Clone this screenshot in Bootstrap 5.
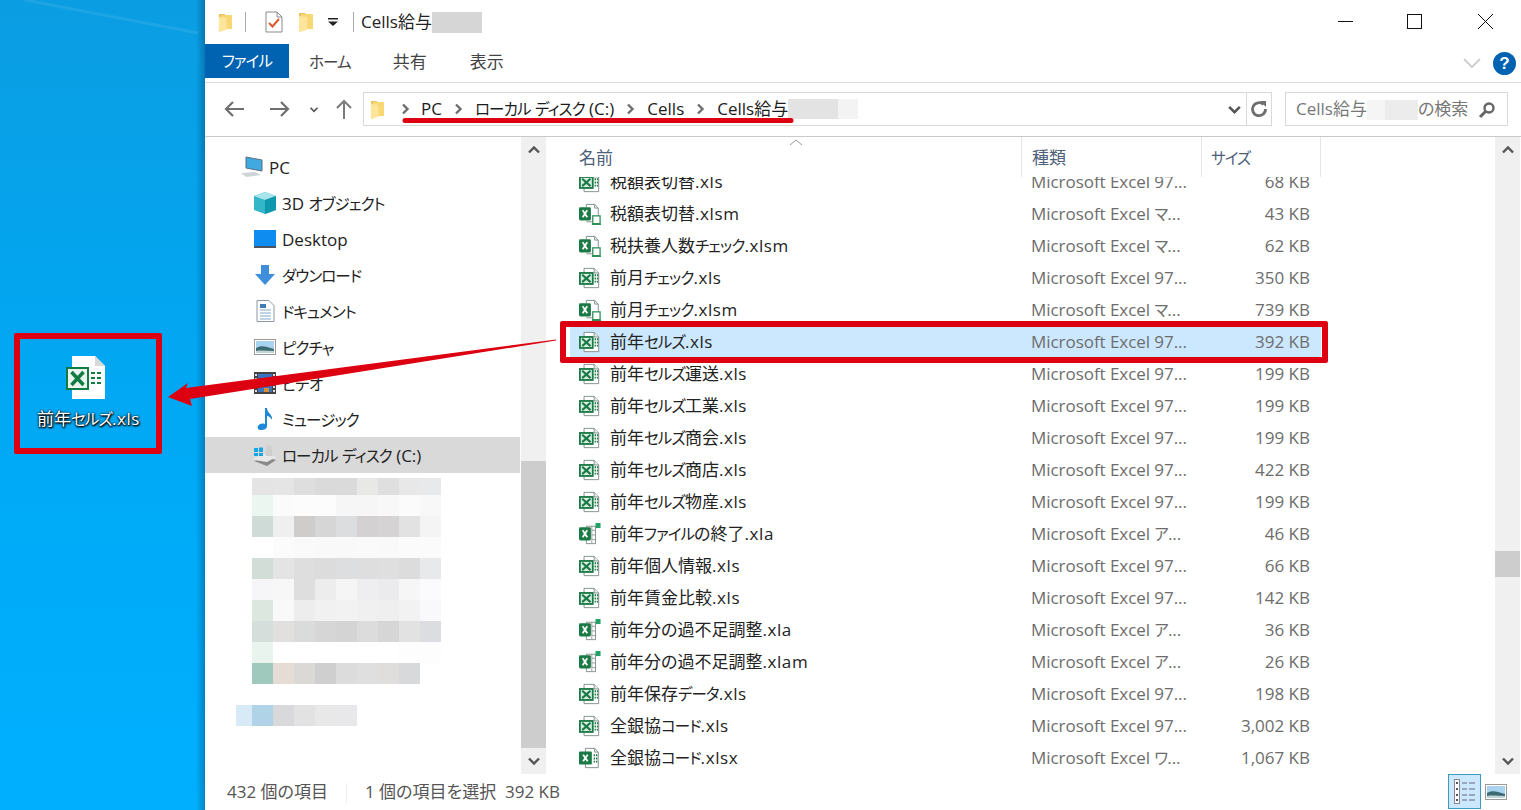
<!DOCTYPE html>
<html lang="ja">
<head>
<meta charset="UTF-8">
<title>Cells給与</title>
<link href="https://cdn.jsdelivr.net/npm/bootstrap@5.3.2/dist/css/bootstrap.min.css" rel="stylesheet">
<style>
html, body { height: 810px; overflow: hidden; }
body { font-family: "Open Sans", "Noto Sans CJK JP", sans-serif; font-size: 17px; line-height: 1.2; color: #222; background: #fff; position: relative; font-feature-settings: "palt"; }
svg { display: block; flex: none; }
.kana { font-size: 15.5px; letter-spacing: -.9px; }
.ext { letter-spacing: .6px; }

.desk-pane { width: 205px; flex: none; padding: 356px 0 0 66px; color: #fff; position: relative;
  background: linear-gradient(to right, transparent 196px, rgba(0, 50, 90, .35) 205px), linear-gradient(to bottom, #0b9de2 0%, #03a5ef 35%, #00abf8 65%, #00b0ff 100%); }
.desk-label { margin: 9px 0 0 -29px; text-shadow: 0 1px 2px #000, 1px 1px 2px #000, 0 0 2px #000; white-space: nowrap; }
.desk-mark { position: absolute; left: 14px; top: 333px; width: 148px; height: 121px; border: 6px solid #dd0010; border-radius: 2px; }

.win { min-width: 0; height: 810px; }
.title-bar { height: 44px; flex: none; }
.title-sep { width: 1px; height: 20px; background: #aaa; }
.tb-folder { margin-left: 13px; }
.tb-sep1 { margin-left: 12px; }
.tb-check { margin-left: 19px; }
.tb-folder2 { margin-left: 15px; }
.tb-drop { margin-left: 14px; }
.tb-sep2 { margin-left: 15px; }
.tb-title { margin-left: 7px; }
.title-blur { width: 50px; height: 21px; background: #d6d6d6; }
.win-ctrls { width: 183px; padding-right: 28px; }
.ctrl-max { margin-left: 54px; }
.ctrl-close { margin-left: 56px; }
.tab-bar { height: 39px; flex: none; border-bottom: 1px solid #dadada; padding-right: 5px; }
.tab-file { width: 84px; height: 34px; background: #0063b1; color: #fff; }
.tab-item { color: #444; height: 34px; padding-top: 3px; }
.tab-home { margin-left: 20px; }
.tab-share { margin-left: 42px; }
.tab-view { margin-left: 43px; }
.tab-tools { height: 38px; }
.help-dot { width: 23px; height: 23px; border-radius: 50%; background: #0063b1; color: #fff; font-family: "Liberation Sans", sans-serif; font-weight: 700; font-size: 17px; line-height: 23px; text-align: center; }
.addr-bar { height: 54px; flex: none; border-bottom: 1px solid #c9c9c9; padding: 9px 13px 10px 0; }
.addr-nav { width: 158px; padding-left: 19px; }
.nav-fwd { margin-left: 26px; }
.nav-down { margin-left: 19px; }
.nav-up { margin-left: 17px; }
.addr-box { width: 909px; height: 34px; border: 1px solid #d9d9d9; }
.addr-folder { margin-left: 6px; }
.addr-path { color: #1c1c1c; padding-top: 1px; }
.path-chev { margin: 0 12px 0 11px; }
.path-chev-first { margin: 0 11px 0 15px; }
.path-blur { width: 50px; height: 20px; background: #e3e3e3; }
.path-blur2 { width: 20px; height: 20px; background: #f3f3f3; }
.addr-tools { width: 25px; height: 32px; border-left: 1px solid #d9d9d9; }
.search-box { width: 223px; height: 34px; margin-left: 13px; border: 1px solid #d9d9d9; color: #777; padding: 1px 11px 0 10px; }
.search-blur { width: 18px; height: 20px; background: #f5f5f5; }
.search-blur2 { width: 33px; height: 20px; background: #ececec; }

.main-row { min-height: 0; }
.nav-pane { width: 316px; flex: none; padding-top: 12px; }
.nav-row { height: 36px; padding-left: 49px; gap: 6px; color: #222; width: 315px; }
.nav-row.nav-top { padding-left: 37px; gap: 5px; }
.nav-row.nav-sel { background: #d9d9d9; }
.nav-ico { width: 22px; }
.nav-label { padding-top: 2px; }
.mosaic-top { height: 5px; }
.mosaic-line { display: flex; margin-left: 47px; height: 21px; }
.mosaic-line span { display: block; width: 21px; }
.mosaic-line .mosaic-lead { width: 16px; margin-left: -16px; background: #d8eaf6; }
.scroll-rail { width: 25px; flex: none; background: #f0f0f0; }
.scroll-btn { height: 26px; flex: none; }
.scroll-thumb { background: #cdcdcd; }
.rail-nav-gap { height: 298px; }
.rail-file-gap { height: 388px; }
.rail-file-thumb { height: 26px; }
.win-edge { width: 1px; }
.file-pane { min-width: 0; padding-left: 24px; }
.file-head { height: 40px; flex: none; color: #4c607a; position: relative; }
.col-name { width: 451px; flex: none; padding-left: 9px; }
.col-type { width: 180px; flex: none; padding-left: 10px; letter-spacing: -.05px; }
.col-size { width: 120px; flex: none; padding-right: 11px; }
.file-head > div { height: 40px; display: flex; align-items: center; padding-top: 2px; }
.file-head .col-type, .file-head .col-size { border-left: 1px solid #e5e5e5; }
.file-head .col-size { border-right: 1px solid #e5e5e5; padding-left: 9px; }
.sort-caret { position: absolute; left: 219px; top: 2px; }
.file-scroll { min-height: 0; overflow: hidden; }
.file-list { margin-top: -11px; }
.file-row { height: 32px; width: 751px; padding-top: 1px; }
.file-row.file-sel { background: #cce8ff; }
.file-row .col-name { display: flex; align-items: center; gap: 9px; }
.file-row .col-type, .file-row .col-size { color: #6d6d6d; }
.file-row svg { margin-top: -1px; }
.status-bar { height: 36px; flex: none; color: #555; padding: 1px 0 0 22px; position: relative; }
.status-sep { width: 1px; height: 20px; background: #eee; margin: 0 18px 0 18px; }
.view-btns { position: absolute; left: 1243px; top: 0; gap: 4px; }
.view-on { width: 33px; height: 35px; background: #cce8ff; border: 1px solid #3e9bbb; }

.mark-layer { position: absolute; left: 0; top: 0; pointer-events: none; }
.file-mark { position: absolute; left: 560px; top: 321px; width: 768px; height: 42px; border: 6px solid #dd0010; border-radius: 2px; pointer-events: none; }
</style>
</head>
<body class="d-flex">

<svg width="0" height="0" class="position-absolute">
  <symbol id="folder" viewBox="0 0 16 22">
    <path d="M1 2h6l1 1v15l-7 3z" fill="#e9c25c"/><path d="M3 3h12v15H3z" fill="#f8d775"/><path d="M1 5l8 1v13l-8 2z" fill="#fde59b"/>
  </symbol>
  <symbol id="xls" viewBox="0 0 24 24">
    <path d="M5.500 1.500h11l5 5v16h-16z" fill="#fff" stroke="#7f8a84"/><path d="M16.500 1.500v5h5" fill="#eee" stroke="#7f8a84"/>
    <rect x="1" y="6.500" width="14" height="12" fill="#d9efe2" stroke="#1c7a46" stroke-width="2"/>
    <path d="M3.500 8.500l9 8M12.500 8.500l-9 8" stroke="#1c7a46" stroke-width="2.400"/>
    <path d="M17 9h1.500M19.500 9H21M17 12.500h1.500M19.500 12.500H21M17 16h1.500M19.500 16H21" stroke="#1c7a46" stroke-width="2"/>
  </symbol>
  <symbol id="xlsm" viewBox="0 0 24 24">
    <path d="M8 1.500h9l4 4v8M8 1.500v3M8 20.500h6" fill="none" stroke="#7f8a84"/><path d="M17 1.500v4h4" fill="none" stroke="#7f8a84"/>
    <rect x="0" y="4.500" width="13" height="14.500" rx="1.500" fill="#1c7a46"/>
    <path d="M4 8l5 7.500M9 8l-5 7.500" stroke="#fff" stroke-width="2"/>
    <rect x="15" y="14" width="8" height="8.500" fill="#fff" stroke="#2f8f5b" stroke-width="1.400"/><path d="M14 23.200h10" stroke="#2f8f5b" stroke-width="1.600"/>
  </symbol>
  <symbol id="xla" viewBox="0 0 24 24">
    <path d="M8 3.500h10v19H8z" fill="#fff" stroke="#7f8a84"/><path d="M14 8h4M14 13h4M14 18h4M14 3.500v19" stroke="#999"/>
    <rect x="0" y="4.500" width="13" height="14.500" rx="1.500" fill="#1c7a46"/>
    <path d="M4 8l5 7.500M9 8l-5 7.500" stroke="#fff" stroke-width="2"/>
    <rect x="18" y="0" width="5.500" height="5.500" fill="#21a366"/>
  </symbol>
  <symbol id="xlsx" viewBox="0 0 24 24">
    <path d="M7 1.500h10l4 4v17H7z" fill="#fff" stroke="#7f8a84"/><path d="M17 1.500v4h4" fill="none" stroke="#7f8a84"/>
    <rect x="0" y="5" width="14" height="14" rx="1" fill="#1c7a46"/>
    <path d="M4.500 8.500l5 7M9.500 8.500l-5 7" stroke="#fff" stroke-width="2"/>
    <path d="M16 9h1.500M18.500 9H20M16 12.500h1.500M18.500 12.500H20M16 16h1.500M18.500 16H20" stroke="#1c7a46" stroke-width="2"/>
  </symbol>
  <symbol id="chev-r" viewBox="0 0 10 12"><path d="M3 1.500L7.500 6 3 10.500" fill="none" stroke="#6e6e6e" stroke-width="2.400"/></symbol>
  <symbol id="chev-d" viewBox="0 0 14 10"><path d="M2 2.500l5 5 5-5" fill="none" stroke="#555" stroke-width="2.400"/></symbol>
  <symbol id="chev-u" viewBox="0 0 14 10"><path d="M2 7.500l5-5 5 5" fill="none" stroke="#555" stroke-width="2.400"/></symbol>
  <symbol id="landscape" viewBox="0 0 22 16">
    <rect x=".5" y=".5" width="21" height="15" fill="#fff" stroke="#9a9a9a"/><rect x="2" y="2" width="18" height="12" fill="#a9d3ee"/>
    <path d="M2 9c5-3 9-2 18 1v4H2z" fill="#3c6b73"/><path d="M2 12c6-1 12 0 18 0v2H2z" fill="#c2d5d6"/>
  </symbol>
</svg>

<!-- desktop side -->
<div class="desk-pane d-flex flex-column align-items-start">
  <svg width="40" height="44" viewBox="0 0 40 44">
    <path d="M6 0h23l10 10v33H6z" fill="#fff"/><path d="M29 0v10h10z" fill="#d8d8d8"/>
    <rect x="1" y="12" width="21" height="21" fill="#e9f5ee" stroke="#107c41" stroke-width="2"/>
    <path d="M5.500 16l12 13M17.500 16l-12 13" stroke="#107c41" stroke-width="3.500"/>
    <path d="M25 17h4M31 17h4M25 22h4M31 22h4M25 27h4M31 27h4" stroke="#107c41" stroke-width="2"/>
  </svg>
  <div class="desk-label">前年セルズ.xls</div>
  <div class="desk-mark"></div>
</div>

<!-- explorer window -->
<div class="win d-flex flex-column flex-grow-1 bg-white">

  <div class="title-bar d-flex align-items-center">
    <svg class="tb-folder" width="15" height="21"><use href="#folder"/></svg>
    <span class="title-sep tb-sep1"></span>
    <svg class="tb-check" width="18" height="22" viewBox="0 0 18 22">
      <path d="M1 1h11l5 5v15H1z" fill="#fff" stroke="#8a8a8a"/><path d="M12 1v5h5" fill="none" stroke="#8a8a8a"/>
      <path d="M4 12l3.500 3.500L14 8" fill="none" stroke="#d9582b" stroke-width="2"/>
    </svg>
    <svg class="tb-folder2" width="16" height="22"><use href="#folder"/></svg>
    <svg class="tb-drop" width="10" height="8" viewBox="0 0 10 8"><path d="M0 0h10v1.500H0z" fill="#222"/><path d="M0 3.500h10L5 8z" fill="#222"/></svg>
    <span class="title-sep tb-sep2"></span>
    <span class="tb-title">Cells給与</span>
    <span class="title-blur"></span>
    <div class="win-ctrls ms-auto d-flex align-items-center">
      <svg width="15" height="16" viewBox="0 0 15 16"><path d="M0 7.500h15" stroke="#111"/></svg>
      <svg class="ctrl-max" width="15" height="16" viewBox="0 0 15 16"><rect x=".5" y=".5" width="14" height="14" fill="none" stroke="#111"/></svg>
      <svg class="ctrl-close" width="15" height="16" viewBox="0 0 15 16"><path d="M0 0l15 15M15 0L0 15" stroke="#111"/></svg>
    </div>
  </div>

  <div class="tab-bar d-flex align-items-start">
    <div class="tab-file d-flex align-items-center justify-content-center"><span>ファイル</span></div>
    <div class="tab-item tab-home d-flex align-items-center"><span>ホーム</span></div>
    <div class="tab-item tab-share d-flex align-items-center">共有</div>
    <div class="tab-item tab-view d-flex align-items-center">表示</div>
    <div class="tab-tools ms-auto d-flex align-items-center gap-2">
      <svg width="18" height="10" viewBox="0 0 18 10"><path d="M1 1l8 8 8-8" fill="none" stroke="#c4c4c4" stroke-width="1.600"/></svg>
      <div class="help-dot ms-1">?</div>
    </div>
  </div>

  <div class="addr-bar d-flex align-items-center">
    <div class="addr-nav d-flex align-items-center">
      <svg width="20" height="16" viewBox="0 0 20 16"><path d="M20 8H2M9 1L2 8l7 7" fill="none" stroke="#6f6f6f" stroke-width="2.200"/></svg>
      <svg class="nav-fwd" width="20" height="16" viewBox="0 0 20 16"><path d="M0 8h18M11 1l7 7-7 7" fill="none" stroke="#6f6f6f" stroke-width="2.200"/></svg>
      <svg class="nav-down" width="10" height="7"><use href="#chev-d"/></svg>
      <svg class="nav-up" width="16" height="20" viewBox="0 0 16 20"><path d="M8 20V2M1 9l7-7 7 7" fill="none" stroke="#7b7b7b" stroke-width="2"/></svg>
    </div>
    <div class="addr-box d-flex align-items-center">
      <svg class="addr-folder" width="15" height="21"><use href="#folder"/></svg>
      <div class="addr-path d-flex align-items-center flex-grow-1">
        <svg class="path-chev-first" width="10" height="12"><use href="#chev-r"/></svg>
        <span>PC</span>
        <svg class="path-chev" width="10" height="12"><use href="#chev-r"/></svg>
        <span>ローカル ディスク (C:)</span>
        <svg class="path-chev" width="10" height="12"><use href="#chev-r"/></svg>
        <span>Cells</span>
        <svg class="path-chev" width="10" height="12"><use href="#chev-r"/></svg>
        <span>Cells給与</span>
        <span class="path-blur"></span>
        <span class="path-blur2"></span>
      </div>
      <svg class="me-1" width="15" height="11"><use href="#chev-d"/></svg>
      <div class="addr-tools d-flex align-items-center justify-content-center">
        <svg width="18" height="18" viewBox="0 0 18 18"><path d="M13.500 4.500A6.500 6.500 0 1 0 15.500 9" fill="none" stroke="#6e6e6e" stroke-width="2.800"/><path d="M10 1h6v6z" fill="#6e6e6e"/></svg>
      </div>
    </div>
    <div class="search-box d-flex align-items-center">
      <span>Cells給与</span>
      <span class="search-blur"></span>
      <span class="search-blur2"></span>
      <span>の検索</span>
      <svg class="ms-auto" width="18" height="18" viewBox="0 0 18 18"><circle cx="11" cy="7" r="4.500" fill="none" stroke="#666" stroke-width="2.400"/><path d="M7.500 10.500L2 16" stroke="#666" stroke-width="3"/></svg>
    </div>
  </div>

  <div class="main-row d-flex flex-grow-1">
    <div class="nav-pane" id="navPane"></div>
    <div class="scroll-rail d-flex flex-column">
      <div class="scroll-btn d-flex align-items-center justify-content-center"><svg width="14" height="10"><use href="#chev-u"/></svg></div>
      <div class="rail-nav-gap"></div>
      <div class="scroll-thumb flex-grow-1"></div>
      <div class="scroll-btn d-flex align-items-center justify-content-center"><svg width="14" height="10"><use href="#chev-d"/></svg></div>
    </div>
    <div class="file-pane d-flex flex-column flex-grow-1">
      <div class="file-head d-flex">
        <div class="col-name"><span>名前</span></div>
        <div class="col-type"><span>種類</span></div>
        <div class="col-size"><span>サイズ</span></div>
        <svg class="sort-caret" width="14" height="7" viewBox="0 0 14 7"><path d="M1 6l6-5 6 5" fill="none" stroke="#9a9a9a"/></svg>
      </div>
      <div class="file-scroll flex-grow-1"><div class="file-list" id="fileList"></div></div>
    </div>
    <div class="scroll-rail d-flex flex-column">
      <div class="scroll-btn d-flex align-items-center justify-content-center"><svg width="14" height="10"><use href="#chev-u"/></svg></div>
      <div class="rail-file-gap"></div>
      <div class="scroll-thumb rail-file-thumb"></div>
      <div class="flex-grow-1"></div>
      <div class="scroll-btn d-flex align-items-center justify-content-center"><svg width="14" height="10"><use href="#chev-d"/></svg></div>
    </div>
    <div class="win-edge"></div>
  </div>

  <div class="status-bar d-flex align-items-center">
    <span>432 個の項目</span>
    <span class="status-sep"></span>
    <span>1 個の項目を選択&nbsp; 392 KB</span>
    <div class="view-btns d-flex align-items-center">
      <div class="view-on d-flex align-items-center justify-content-center">
        <svg width="22" height="25" viewBox="0 0 22 25">
          <rect x=".5" y=".5" width="5" height="24" fill="#fff" stroke="#888"/>
          <path d="M2 4h2M2 10h2M2 16h2M2 21h2" stroke="#555" stroke-width="2"/>
          <path d="M8 4h5M15 4h6M8 10h5M15 10h6M8 16h5M15 16h6M8 21h5M15 21h6" stroke="#667" stroke-width="1"/>
        </svg>
      </div>
      <svg width="22" height="16"><use href="#landscape"/></svg>
    </div>
  </div>
</div>

<!-- annotations -->
<div class="file-mark"></div>
<svg class="mark-layer" width="1521" height="810" viewBox="0 0 1521 810">
  <path d="M25 0L198 33" stroke="#fff" stroke-opacity=".08" stroke-width="3"/>
  <path d="M405 120.500H791" stroke="#dd0010" stroke-width="5" stroke-linecap="round"/>
  <path d="M168 397L188 383 186 388 556 339.500 556 340.500 190 399 192 406z" fill="#dd0010"/>
</svg>

<script>
// nav tree
const navItems = [
  ["PC", '<svg width="28" height="24" viewBox="0 0 28 24"><path d="M7 2l16 3v11L7 13z" fill="#3fa9e0" stroke="#5a6f80"/><path d="M2 18l14-1 6 3-15 2z" fill="#cfd4d8"/></svg>', "nav-top"],
  ["3D オブジェクト", '<svg width="22" height="22" viewBox="0 0 22 22"><path d="M11 0l11 4v14l-11 4L0 18V4z" fill="#34b6c9"/><path d="M11 8L0 4l11-4 11 4z" fill="#a8e6ec"/><path d="M11 8v14l11-4V4z" fill="#0f97ad"/></svg>'],
  ["Desktop", '<svg width="22" height="18" viewBox="0 0 22 18"><rect width="22" height="16" fill="#0f8cf0"/><path d="M0 16h22v2H0z" fill="#4a5560"/></svg>'],
  ["ダウンロード", '<svg width="22" height="20" viewBox="0 0 22 20"><path d="M7 0h8v9h6L11 20 1 9h6z" fill="#3d8fdc"/></svg>'],
  ["ドキュメント", '<svg width="22" height="22" viewBox="0 0 22 22"><path d="M3 .5h12l5 5v16H3z" fill="#fff" stroke="#8d99a6"/><path d="M6 4h6v4H6z" fill="#3d7ab8"/><path d="M6 10h11M6 13h11M6 16h11M6 19h11" stroke="#7fa8c9"/></svg>'],
  ["ピクチャ", '<svg width="22" height="16"><use href="#landscape"/></svg>'],
  ["ビデオ", '<svg width="22" height="22" viewBox="0 0 22 22"><rect width="22" height="22" fill="#444"/><rect x="4" y="2" width="14" height="8" fill="#3973c2"/><rect x="4" y="12" width="14" height="8" fill="#3973c2"/><path d="M1 3h2M1 7h2M1 11h2M1 15h2M1 19h2M19 3h2M19 7h2M19 11h2M19 15h2M19 19h2" stroke="#ddd" stroke-width="2"/><path d="M10 10V6h5v4M10 20v-4h5v4" fill="#d98f2a"/></svg>'],
  ["ミュージック", '<svg width="22" height="22" viewBox="0 0 22 22"><path d="M11 0h2c0 5 6 6 5 12-1-2-3-4-5-4v10c0 3-3 4-6 4-3 0-4-2-3-4 1-2 4-3 7-2z" fill="#1e88d8"/></svg>'],
  ["ローカル ディスク (C:)", '<svg width="22" height="22" viewBox="0 0 22 22"><path d="M0 17l10-4 12 3-9 6z" fill="#8a8a8a"/><path d="M0 14l10-4 12 3-9 5-13-2z" fill="#e8e8e8"/><path d="M12 6c0-3 1-5 3-5s3 2 3 5v6h-6z" fill="#cfcfcf"/><path d="M0 4h4v4H0zM5 3.500h4v4.500H5zM0 9h4v3H0zM5 9h4v3H5z" fill="#18a5e8"/></svg>', "nav-sel"]
];

// blurred out folders below the drive
const mosaic = [
  [17, ["#e4e4e4","#e5e5e5","#dedede","#dadada","#dadada","#e8e8e6","#dfdfdf","#e8e8e8","#e8e9ea"]],
  [21, ["#ecf6f0","#fbfbfb","#fcfcfc","#fcfcfc","#f6f6f6","#f6f6f6","#f8f8f8","#fbfbfb","#f8f8f8"]],
  [21, ["#cfdbd6","#efefef","#cfcdcc","#d6d6d7","#dcdddf","#d3d1d1","#d5d3d3","#e2e2e2","#f4f4f4"]],
  [21, ["#fff","#fbfbfb","#fafafa","#f9f9f9","#f9f9f9","#fafafa","#f9f9f9","#fbfbfb","#fbfbfb"]],
  [21, ["#d3ddd8","#e4e4e4","#dedede","#dcdcdc","#dcdee0","#dedede","#dfdfdf","#dcdcdc","#e8e9eb"]],
  [21, ["#f6f6f9","#f7f7f8","#dedede","#ededed","#f5f5f5","#eeeef0","#ebebed","#f6f6f7","#fbfbfd"]],
  [21, ["#dbe7df","#f9f9fa","#ededed","#f1f1f1","#f2f2f2","#f0f0f1","#efeff0","#f2f2f3","#f9f9fb"]],
  [21, ["#d5dedb","#e2e0df","#dadcdc","#d5d6d5","#d4d4d4","#dcdcdc","#d6d6d6","#e3e2e2","#dcdde0"]],
  [21, ["#eaf4ee","#fff","#fff","#fff","#fff","#fff","#fff","#fdfdfd","#fdfdfd"]],
  [21, ["#9ec9bc","#e6dcd6","#dbd9d6","#cfcfcf","#dcdcdc","#dfdfdf","#dfdedd","#d8d9db"]],
  [21, []],
  [21, ["#b0d3e8","#d9d8da","#e2e2e2","#e8e8e8","#e8e8ea"]],
];
let navHtml = navItems.map(([label, icon, cls]) =>
  `<div class="nav-row d-flex align-items-center ${cls || ""}"><span class="nav-ico d-flex justify-content-center">${icon}</span><span class="nav-label">${label}</span></div>`).join("");
navHtml += '<div class="mosaic-top"></div>';
mosaic.forEach(([h, cells], i) => {
  const lead = i === 11 ? '<span class="mosaic-lead"></span>' : "";
  navHtml += `<div class="mosaic-line" style="height:${h}px">${lead}${cells.map(c => `<span style="background:${c}"></span>`).join("")}</div>`;
});
document.getElementById("navPane").innerHTML = navHtml;

// file list
const T97 = "Microsoft Excel 97...", TM = "Microsoft Excel マ...", TA = "Microsoft Excel ア...", TW = "Microsoft Excel ワ...";
const files = [
  ["税額表切替.xls", "xls", T97, "68 KB"],
  ["税額表切替.xlsm", "xlsm", TM, "43 KB"],
  ["税扶養人数チェック.xlsm", "xlsm", TM, "62 KB"],
  ["前月チェック.xls", "xls", T97, "350 KB"],
  ["前月チェック.xlsm", "xlsm", TM, "739 KB"],
  ["前年セルズ.xls", "xls", T97, "392 KB", true],
  ["前年セルズ運送.xls", "xls", T97, "199 KB"],
  ["前年セルズ工業.xls", "xls", T97, "199 KB"],
  ["前年セルズ商会.xls", "xls", T97, "199 KB"],
  ["前年セルズ商店.xls", "xls", T97, "422 KB"],
  ["前年セルズ物産.xls", "xls", T97, "199 KB"],
  ["前年ファイルの終了.xla", "xla", TA, "46 KB"],
  ["前年個人情報.xls", "xls", T97, "66 KB"],
  ["前年賃金比較.xls", "xls", T97, "142 KB"],
  ["前年分の過不足調整.xla", "xla", TA, "36 KB"],
  ["前年分の過不足調整.xlam", "xla", TA, "26 KB"],
  ["前年保存データ.xls", "xls", T97, "198 KB"],
  ["全銀協コード.xls", "xls", T97, "3,002 KB"],
  ["全銀協コード.xlsx", "xlsx", TW, "1,067 KB"],
];
document.getElementById("fileList").innerHTML = files.map(([name, icon, type, size, sel]) => `
  <div class="file-row d-flex align-items-center ${sel ? "file-sel" : ""}">
    <div class="col-name"><svg width="22" height="22"><use href="#${icon}"/></svg><span>${name}</span></div>
    <div class="col-type">${type}</div>
    <div class="col-size text-end">${size}</div>
  </div>`).join("");

// explorer's UI font has much narrower katakana than Noto, so squeeze those runs
const walker = document.createTreeWalker(document.body, NodeFilter.SHOW_TEXT);
const nodes = [];
while (walker.nextNode()) {
  const p = walker.currentNode.parentNode.nodeName;
  if (p !== "SCRIPT" && /[\u30A0-\u30FF]|\.xl/.test(walker.currentNode.nodeValue)) nodes.push(walker.currentNode);
}
nodes.forEach(node => {
  const holder = document.createElement("span");
  holder.innerHTML = node.nodeValue
    .replace(/[\u30A0-\u30FF]+/g, s => `<span class="kana">${s}</span>`)
    .replace(/\.xl\w*/g, s => `<span class="ext">${s}</span>`);
  node.replaceWith(holder);
});
</script>
<script src="https://cdn.jsdelivr.net/npm/bootstrap@5.3.2/dist/js/bootstrap.bundle.min.js"></script>
</body>
</html>
